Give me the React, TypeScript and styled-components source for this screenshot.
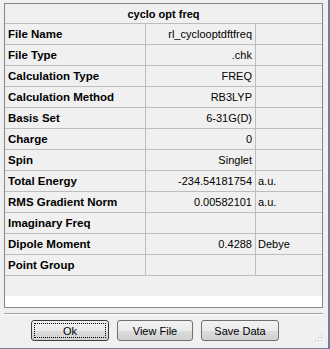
import React from "react";
import styled, {createGlobalStyle} from "styled-components";

const GlobalStyle = createGlobalStyle`
  html, body {
    margin: 0;
    padding: 0;
    background: #f0f0f0;
  }
  body {
    font-family: "Liberation Sans", Arial, sans-serif;
    font-size: 11px;
    color: #000;
  }
`;

type Row = {
    label: string;
    value?: string;
    unit?: string;
};

const rows: Row[] = [
    {label: "File Name", value: "rl_cyclooptdftfreq"},
    {label: "File Type", value: ".chk"},
    {label: "Calculation Type", value: "FREQ"},
    {label: "Calculation Method", value: "RB3LYP"},
    {label: "Basis Set", value: "6-31G(D)"},
    {label: "Charge", value: "0"},
    {label: "Spin", value: "Singlet"},
    {label: "Total Energy", value: "-234.54181754", unit: "a.u."},
    {label: "RMS Gradient Norm", value: "0.00582101", unit: "a.u."},
    {label: "Imaginary Freq"},
    {label: "Dipole Moment", value: "0.4288", unit: "Debye"},
    {label: "Point Group"},
];

const App = () => {
    return (
        <>
            <GlobalStyle/>
            <Window>
                <Grid>
                    <Title>cyclo opt freq</Title>
                    {rows.map((row) => (
                        <React.Fragment key={row.label}>
                            <Cell $bold>{row.label}</Cell>
                            <Cell $align="right">{row.value}</Cell>
                            <Cell $last>{row.unit}</Cell>
                        </React.Fragment>
                    ))}
                    <EmptyRow/>
                    <WhiteArea/>
                </Grid>
                <Separator/>
                <ButtonBar>
                    <Button $default>Ok</Button>
                    <Button $width={76}>View File</Button>
                    <Button>Save Data</Button>
                </ButtonBar>
                <Grip width="8" height="8" viewBox="0 0 8 8">
                    <rect x="6" y="0" width="1" height="1" fill="#b8b8b8"/>
                    <rect x="3" y="3" width="1" height="1" fill="#b8b8b8"/>
                    <rect x="6" y="3" width="1" height="1" fill="#b8b8b8"/>
                    <rect x="0" y="6" width="1" height="1" fill="#b8b8b8"/>
                    <rect x="3" y="6" width="1" height="1" fill="#b8b8b8"/>
                    <rect x="6" y="6" width="1" height="1" fill="#b8b8b8"/>
                </Grip>
            </Window>
        </>
    );
};

const Window = styled.div`
  position: relative;
  box-sizing: border-box;
  width: 330px;
  height: 349px;
  background: #f0f0f0;
  border-right: 2px solid #6f8098;
  border-bottom: 1px solid #6f8098;
  padding: 3px 0 0 4px;
  display: flex;
  flex-direction: column;
`;

const Grid = styled.div`
  width: 319px;
  box-sizing: border-box;
  border: 1px solid #828790;
  display: grid;
  grid-template-columns: 141px 110px 66px;
  grid-template-rows: 20px repeat(12, 21px) 20px 11px;
`;

const Title = styled.div`
  grid-column: 1 / 4;
  box-sizing: border-box;
  border-bottom: 1px solid #bdbdbd;
  display: flex;
  align-items: center;
  justify-content: center;
  font-weight: bold;
`;

const Cell = styled.div<{ $bold?: boolean; $align?: "left" | "right"; $last?: boolean }>`
  box-sizing: border-box;
  border-bottom: 1px solid #bdbdbd;
  border-right: ${(p) => (p.$last ? "none" : "1px solid #bdbdbd")};
  display: flex;
  align-items: center;
  justify-content: ${(p) => (p.$align === "right" ? "flex-end" : "flex-start")};
  padding: ${(p) => (p.$align === "right" ? "0 3px 0 0" : p.$last ? "0 0 0 2px" : "0 0 0 3px")};
  font-weight: ${(p) => (p.$bold ? "bold" : "normal")};
  font-size: ${(p) => (p.$bold ? "11.5px" : "11px")};
  white-space: nowrap;
  overflow: hidden;
`;

const EmptyRow = styled.div`
  grid-column: 1 / 4;
`;

const WhiteArea = styled.div`
  grid-column: 1 / 4;
  background: #fff;
`;

const Separator = styled.div`
  width: 319px;
  margin-top: 5px;
  height: 1px;
  background: #a0a0a0;
  border-bottom: 1px solid #fff;
`;

const ButtonBar = styled.div`
  display: flex;
  gap: 8px;
  margin-top: 5px;
  padding-left: 27px;
`;

const Button = styled.button<{ $default?: boolean; $width?: number }>`
  width: ${(p) => p.$width ?? 78}px;
  height: 21px;
  box-sizing: border-box;
  border: 1px solid ${(p) => (p.$default ? "#3c3c3c" : "#707070")};
  border-radius: 3px;
  background: linear-gradient(#f2f2f2 0%, #ebebeb 50%, #dddddd 51%, #cfcfcf 100%);
  font-family: "Liberation Sans", Arial, sans-serif;
  font-size: 11px;
  color: #000;
  padding: 0;
  outline: ${(p) => (p.$default ? "1px dotted #000" : "none")};
  outline-offset: -4px;
`;

const Grip = styled.svg`
  position: absolute;
  right: 5px;
  bottom: 6px;
`;

export default App;
